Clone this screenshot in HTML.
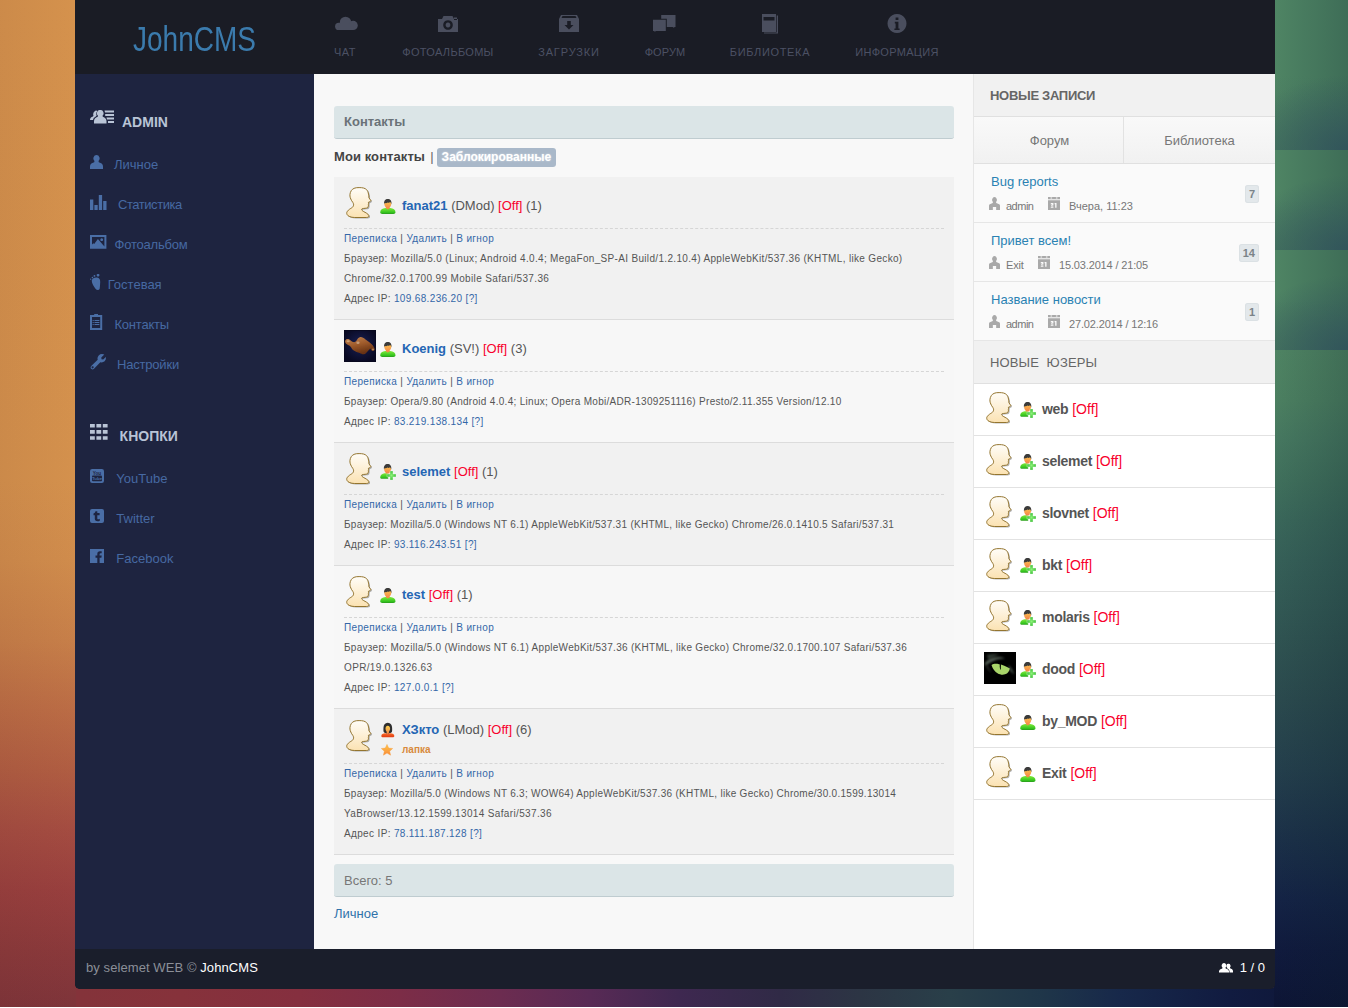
<!DOCTYPE html>
<html lang="ru">
<head>
<meta charset="utf-8">
<title>JohnCMS — Контакты</title>
<style>
*{box-sizing:border-box}
html,body{margin:0;padding:0}
body{width:1348px;height:1008px;overflow:hidden;position:relative;font-family:"Liberation Sans",Arial,sans-serif;font-size:13px;color:#555;background:#fff}
a{text-decoration:none;color:inherit}
/* ---------- wallpaper ---------- */
#wall{position:absolute;left:0;top:0;width:1348px;height:1007px;overflow:hidden;background:#3a2a4a}
#wall .l{position:absolute;left:0;top:0;width:76px;height:1007px;
background:linear-gradient(to right,rgba(90,40,30,.07) 0,rgba(90,40,30,.035) 50%,rgba(0,0,0,0) 100%),
linear-gradient(to bottom,#d5924d 0,#d4914d 480px,#d08c4c 560px,#c77f49 640px,#bb6c45 710px,#b05d42 770px,#a44c41 830px,#983f3e 890px,#8a393b 950px,#7e343a 1007px)}
#wall .r{position:absolute;left:1274px;top:0;width:74px;height:1007px;
background:linear-gradient(to right,rgba(10,30,40,0) 0,rgba(10,30,40,.22) 100%),
linear-gradient(to bottom,#4f8463 0,#4f8463 350px,#4c8061 400px,#467860 440px,#40705c 480px,#3a675a 520px,#366058 560px,#335a55 600px,#2f5251 650px,#2b4a4e 700px,#243f4c 770px,#1b3048 840px,#142345 900px,#101a3d 950px,#0d1535 1007px)}
#wall .r i{position:absolute;left:0;width:74px;display:block;
background:radial-gradient(110px 75px at 100% 100%,rgba(46,78,92,.75) 0,rgba(46,78,92,.4) 45%,rgba(46,78,92,0) 100%),linear-gradient(to bottom,rgba(60,100,85,0) 50%,rgba(58,98,88,.35) 100%),linear-gradient(to right,#4f8564 0,#487b5f 40%,#3e6d57 100%)}
#wall .b{position:absolute;left:0;top:988px;width:1348px;height:19px;
background:linear-gradient(to right,#80343a 0,#84333a 80px,#86323b 180px,#852f3f 300px,#7c2d47 400px,#6c2c50 500px,#582a55 590px,#3e2850 680px,#302a46 780px,#2c3544 860px,#293f49 950px,#1f3649 1040px,#17284a 1120px,#111b40 1230px,#0d1535 1348px)}
/* ---------- frame ---------- */
#page{position:absolute;left:75px;top:0;width:1200px;height:989px;background:#1a1d27;border-radius:0 0 5px 5px;overflow:hidden}
#head{position:absolute;left:0;top:0;width:1200px;height:74px;background:#1a1c25}
#left{position:absolute;left:0;top:74px;width:239px;height:875px;background:#1e2440}
#main{position:absolute;left:239px;top:74px;width:659px;height:875px;background:#f8f8f8}
#right{position:absolute;left:898px;top:74px;width:302px;height:875px;background:#fff;border-left:1px solid #e6e6e6}
#foot{position:absolute;left:0;top:949px;width:1200px;height:40px;background:#1a1e2b;color:#8b8f98;font-size:13px}

/* ---------- header ---------- */
#logo{position:absolute;left:0;top:14.500px;width:239px;text-align:center;font-family:"Liberation Sans",sans-serif;font-size:35px;line-height:48px;color:#3b7bad;transform:scaleX(.8);transform-origin:119.500px 0;white-space:nowrap}
#nav{position:absolute;left:0;top:0;height:74px;width:1200px}
#nav a{position:absolute;top:0;height:74px;width:140px;margin-left:-70px;text-align:center;color:#4c5164;font-size:11px;letter-spacing:.3px;text-transform:uppercase}
#nav a svg{position:absolute;left:50%;top:12px;width:24px;height:24px;margin-left:-12px;fill:#4a4e5e}
#nav a span{position:absolute;left:0;right:0;top:45px;line-height:14px;white-space:nowrap}

/* ---------- left sidebar ---------- */
#left .h{position:absolute;left:0;font-size:14px;font-weight:bold;color:#b9c4d6;line-height:16px;white-space:nowrap}
#left .h svg{position:absolute;fill:#b9c4d6}
#left a{margin-top:1px;position:absolute;font-size:13px;color:#4669a2;line-height:16px;white-space:nowrap}
#left svg.i{position:absolute;fill:#4a6ea6}
#left a.ls{letter-spacing:-.45px}
#left a.l2{letter-spacing:-.2px}

/* ---------- main ---------- */
#main .bar{position:absolute;left:20px;width:620px;height:33px;background:#dbe5e7;border-bottom:1px solid #bfccd0;border-radius:3px;padding-left:10px;line-height:32px;font-size:13px;color:#6a7278}
#main .tabs{position:absolute;left:20px;top:74px;letter-spacing:.08px;font-size:13px;font-weight:bold;color:#444;line-height:18px;white-space:nowrap}
#main .tabs b{display:inline-block;margin-left:-.8px;letter-spacing:0;padding:0 5px;height:19px;line-height:19px;background:#a9b8c9;color:#fff;border-radius:3px;font-size:12px;text-shadow:0 0 2px rgba(255,255,255,.6)}
#main .tabs i{font-style:normal;font-weight:normal;color:#666;margin-left:1.500px}
#list{position:absolute;left:20px;top:103px;width:620px}
.it{position:relative;padding:0 10px 10px;border-bottom:1px solid #dcdcdc;background:#f1f1f1}
.it.e{background:#f7f7f7}
.it .hd{position:relative;height:51px}
.it .hd .av{position:absolute;left:0;top:10px;width:32px;height:32px}
.it .hd .ic{position:absolute;left:36px;top:21px;width:16px;height:16px}
.it .hd .nm{position:absolute;left:58px;top:21px;line-height:16px;font-size:13px;white-space:nowrap;color:#555}
.it .hd .nm a{color:#2466b4;font-weight:bold}
.off{color:#f8002c}
.it .sub{border-top:1px dashed #d6d6d6;font-size:10px;line-height:20px;letter-spacing:.35px;color:#555;white-space:nowrap}
.it .sub a{color:#3467a8}
.it .st{position:absolute;left:58px;top:35px;font-size:10px;line-height:12px;font-weight:bold;color:#d88a3c;letter-spacing:0}

/* ---------- right ---------- */
#right .rh{height:43px;background:#f1f1f1;border-bottom:1px solid #e0e0e0;padding-left:16px;line-height:43px;font-size:13px;color:#666;white-space:pre}
#right .rh b{letter-spacing:-.3px}
#right .rt{height:47px;border-bottom:1px solid #e0e0e0;background:linear-gradient(#f9f9f9,#f1f1f1);position:relative}
#right .rt a{position:absolute;top:0;height:46px;line-height:47px;text-align:center;font-size:13px;color:#777}
#right .en{position:relative;height:59px;border-bottom:1px solid #e6e6e6;background:#fafafa}
#right .en .t{position:absolute;left:17px;top:10px;line-height:16px;font-size:13px;color:#2a82b3;white-space:nowrap}
#right .en .m{position:absolute;top:35px;line-height:14px;font-size:11px;color:#777;white-space:nowrap}
#right .en svg{position:absolute;top:33px;fill:#a9a9a9}
#right .en .bd{position:absolute;right:16px;top:21px;height:18px;padding:0 4px;min-width:14px;text-align:center;line-height:18px;font-size:11px;font-weight:bold;color:#7b8388;background:#e3e8eb;border-radius:3px;box-shadow:inset 0 0 0 1px #dbe1e4}
#right .us{position:relative;height:52px;border-bottom:1px solid #e2e2e2;background:#fff}
#right .us .av{position:absolute;left:10px;top:8px;width:32px;height:32px}
#right .us .ic{position:absolute;left:46px;top:18px;width:16px;height:16px}
#right .us .nm{position:absolute;left:68px;top:17px;line-height:16px;font-size:14px;white-space:nowrap}
#right .us .nm b{color:#555;letter-spacing:-.3px}
/* ---------- footer ---------- */
#foot .l{position:absolute;left:11px;top:11px;letter-spacing:.08px;line-height:16px;white-space:nowrap}
#foot .l b{font-weight:normal;color:#fff}
#foot .r{position:absolute;right:10px;top:11px;line-height:16px;color:#fff;white-space:nowrap}
#foot svg{position:absolute;left:1144px;top:13.500px;fill:#fff}
</style>
</head>
<body>
<svg width="0" height="0" style="position:absolute">
<defs>
<linearGradient id="gHead" x1="0" y1="0" x2="0" y2="1"><stop offset="0" stop-color="#fffdf8"/><stop offset="1" stop-color="#fbe2b2"/></linearGradient>
<linearGradient id="gBody" x1="0" y1="0" x2="0" y2="1"><stop offset="0" stop-color="#7fe93c"/><stop offset=".75" stop-color="#35c41f"/><stop offset="1" stop-color="#2a9a1c"/></linearGradient>
<linearGradient id="gFace" x1="0" y1="0" x2="0" y2="1"><stop offset="0" stop-color="#fbd04e"/><stop offset="1" stop-color="#f4814a"/></linearGradient>
<linearGradient id="gRed" x1="0" y1="0" x2="0" y2="1"><stop offset="0" stop-color="#f86a2a"/><stop offset="1" stop-color="#e03a10"/></linearGradient>
<linearGradient id="gStar" x1="0" y1="0" x2="0" y2="1"><stop offset="0" stop-color="#ffc84a"/><stop offset="1" stop-color="#f98a3a"/></linearGradient>
<radialGradient id="gPlus" cx=".5" cy=".5" r=".6"><stop offset="0" stop-color="#8df27a"/><stop offset="1" stop-color="#2fb52a"/></radialGradient>
<filter id="fSh" x="-20%" y="-20%" width="150%" height="150%"><feGaussianBlur stdDeviation=".7"/></filter>
<filter id="fB1" x="-20%" y="-20%" width="140%" height="140%"><feGaussianBlur stdDeviation=".9"/></filter>
<symbol id="avh" viewBox="0 0 32 32">
<path d="M15.100 .6C11 .4 8.400 1.800 7.300 3.600C5.800 6 5.600 8.500 6.300 10.800C6.900 12.800 7.800 13.900 8.800 15.400C9.600 16.600 9.800 17.700 9.400 18.800C9 20 8.200 20.600 6.800 21.400C5 22.500 3.400 23.800 2.800 25.400C2.400 27 3.400 28.600 5.200 29.400C7 30.200 8.800 30.500 10.700 30.500H22.400C24.200 30.500 25.200 29.700 24.800 28.500C24.400 27.500 23.600 26.800 22.400 26.100C20.600 25 18.600 24.200 17.800 23.100C17.500 22.400 17.700 21.800 18.400 21.600C20 21.300 22.400 21.400 23.600 20.700C24.300 20.200 24.100 19.200 24.500 18.200C24.300 17.600 24.300 17.200 24.600 16.700C24.300 16.200 24.300 15.700 24.500 15.200C25.500 14.900 26.700 14.200 26.900 13.500C26.300 12.500 25.200 11.600 24.900 10.700C25 9.400 24.800 8.300 24.500 7.100C24.200 5.400 23.700 3.800 22.500 2.600C21.200 1.300 18.800 .5 15.100 .6Z" transform="translate(1.200,1)" fill="#000" opacity=".28" filter="url(#fSh)"/>
<path d="M15.100 .6C11 .4 8.400 1.800 7.300 3.600C5.800 6 5.600 8.500 6.300 10.800C6.900 12.800 7.800 13.900 8.800 15.400C9.600 16.600 9.800 17.700 9.400 18.800C9 20 8.200 20.600 6.800 21.400C5 22.500 3.400 23.800 2.800 25.400C2.400 27 3.400 28.600 5.200 29.400C7 30.200 8.800 30.500 10.700 30.500H22.400C24.200 30.500 25.200 29.700 24.800 28.500C24.400 27.500 23.600 26.800 22.400 26.100C20.600 25 18.600 24.200 17.800 23.100C17.500 22.400 17.700 21.800 18.400 21.600C20 21.300 22.400 21.400 23.600 20.700C24.300 20.200 24.100 19.200 24.500 18.200C24.300 17.600 24.300 17.200 24.600 16.700C24.300 16.200 24.300 15.700 24.500 15.200C25.500 14.900 26.700 14.200 26.900 13.500C26.300 12.500 25.200 11.600 24.900 10.700C25 9.400 24.800 8.300 24.500 7.100C24.200 5.400 23.700 3.800 22.500 2.600C21.200 1.300 18.800 .5 15.100 .6Z" fill="url(#gHead)" stroke="#94752f" stroke-width="1"/>
</symbol>
<symbol id="u1" viewBox="0 0 16 16">
<path d="M.2 14.300C.2 11.600 2.500 10.300 5.200 10H10.400C13.200 10.300 15.500 11.600 15.500 14.300C15.500 15.400 14.600 15.900 13.400 15.900H2.300C1.100 15.900 .2 15.400 .2 14.300Z" fill="url(#gBody)"/>
<path d="M7.800 1.600C10 1.600 11.400 3.400 11.300 5.800C11.200 7.600 10.500 8.700 9.700 9.500V10.300L7.800 11.400L5.900 10.300V9.500C5.100 8.700 4.400 7.600 4.300 5.800C4.200 3.400 5.600 1.600 7.800 1.600Z" fill="url(#gFace)"/>
<path d="M4.200 6.200C3.600 2.800 5.400 .9 7.800 .9C10.300 .9 12 2.800 11.400 6.200C11.100 5.200 10.700 4.600 10.100 4.100C9.300 4.900 8.500 4.900 7.700 4.400C7 5.200 5.800 5.300 4.800 5C4.500 5.300 4.300 5.700 4.200 6.200Z" fill="#3b3b3b"/>
</symbol>
<symbol id="u2" viewBox="0 0 16 16">
<path d="M.2 13.300C.2 10.800 2.300 9.500 4.600 9.200H8.200V14.800H2.200C1 14.800 .2 14.300 .2 13.300Z" fill="url(#gBody)"/>
<path d="M7.600 .8C9.800 .8 11.200 2.600 11.100 5C11 6.800 10.300 7.900 9.500 8.700V9.500H5.700V8.700C4.900 7.900 4.200 6.800 4.100 5C4 2.600 5.400 .8 7.600 .8Z" fill="url(#gFace)"/>
<path d="M4 5.400C3.400 2 5.200 .1 7.600 .1C10.100 .1 11.800 2 11.200 5.400C10.900 4.400 10.500 3.800 9.900 3.300C9.100 4.100 8.300 4.100 7.500 3.600C6.800 4.400 5.600 4.500 4.600 4.200C4.300 4.500 4.100 4.900 4 5.400Z" fill="#3b3b3b"/>
<path d="M10 7H13V10H16V13H13V16H10V13H7V10H10Z" fill="url(#gPlus)" stroke="#f4fff0" stroke-width=".5" stroke-opacity=".7"/>
</symbol>
<symbol id="u3" viewBox="0 0 16 16">
<path d="M1.300 14C1.300 12.300 3 11.500 5 11.300H10.600C12.600 11.500 14.300 12.300 14.300 14C14.300 14.900 13.600 15.300 12.600 15.300H3C2 15.300 1.300 14.900 1.300 14Z" fill="url(#gRed)"/>
<path d="M7.800 .8C10.700 .8 12 3 12.100 5.600C12.200 8 12.400 9.800 11.400 10.600C10.600 11.200 9.600 11.100 9.600 11.100L7.800 12L6 11.100C6 11.100 5 11.200 4.200 10.600C3.200 9.800 3.400 8 3.500 5.600C3.600 3 4.900 .8 7.800 .8Z" fill="#2e2e2e"/>
<path d="M7.800 3.800C9.400 4 10.200 5.200 10.100 6.800C10 8.300 9.400 9.200 8.900 9.800V10.900L7.800 12.600L6.700 10.900V9.800C6.200 9.200 5.600 8.300 5.500 6.800C5.400 5.200 6.200 4 7.800 3.800Z" fill="url(#gFace)"/>
</symbol>
<symbol id="star" viewBox="0 0 12 12">
<path d="M6 .4L7.700 4.100L11.700 4.500L8.700 7.200L9.600 11.200L6 9.100L2.400 11.200L3.300 7.200L.3 4.500L4.300 4.100Z" fill="url(#gStar)" stroke="#f7a040" stroke-width=".4" stroke-linejoin="round"/>
</symbol>
</defs>
</svg>
<div id="wall"><div class="b"></div><div class="l"></div><div class="r"><i style="top:0;height:150px"></i><i style="top:150px;height:100px"></i><i style="top:250px;height:100px"></i></div></div>
<div id="page">
<div id="head">
<div id="logo">JohnCMS</div>
<div id="nav">
<a style="left:270px"><svg viewBox="0 0 24 24" style="overflow:visible"><circle cx="5.700" cy="14.400" r="3.600"/><circle cx="12.500" cy="10.400" r="5.700"/><circle cx="20.200" cy="13.400" r="4.600"/><rect x="5.700" y="12" width="14.500" height="6"/></svg><span style="letter-spacing:.57px">Чат</span></a>
<a style="left:373px"><svg viewBox="0 0 24 24"><path fill-rule="evenodd" d="M2 7h4l1.500-3h9l1.5 3h4v13h-20zM12 8.200a4.800 4.800 0 1 0 .01 0zM12 10.600a2.400 2.400 0 1 1-.01 0zM18 5.500h3v2.500h-3z"/></svg><span>Фотоальбомы</span></a>
<a style="left:494px"><svg viewBox="0 0 24 24"><path fill-rule="evenodd" d="M2 7l2-4h16l2 4v13h-20zM4.500 6h15l-1-2h-13zM10.200 9h3.600v4h2.700l-4.500 4.500-4.500-4.500h2.700z"/></svg><span style="letter-spacing:.87px">Загрузки</span></a>
<a style="left:590px"><svg viewBox="0 0 24 24"><path d="M8.200 2.900h14.300v12.100h-1.300v1l-1.500-1h-5.900v-8.300h-5.600z"/><path d="M0 7.700h12.800v11.300h-9.800l-1.500 1v-1h-1.500z"/></svg><span style="letter-spacing:.1px">Форум</span></a>
<a style="left:695px"><svg viewBox="0 0 24 24"><path fill-rule="evenodd" d="M4 2h14v18h-14zM5.500 5h11v3.500h-11z"/><path d="M18.700 3.500h1.300v18h-14v-1h12.700z"/></svg><span style="letter-spacing:.65px">Библиотека</span></a>
<a style="left:822px"><svg viewBox="0 0 24 24"><path fill-rule="evenodd" d="M12 2a9.500 9.500 0 1 0 .01 0zM10.600 5.500h2.800v2.600h-2.800zM9.800 9.800h3.600v6.600h1.200v1.600h-5.200v-1.600h1.200v-5h-.8z"/></svg><span>Информация</span></a>
</div>
</div>
<div id="left">
<div class="h" style="left:47px;top:40px">ADMIN</div>
<svg class="i" style="left:15px;top:36px;fill:#b9c4d6" width="24" height="14" viewBox="0 0 24 14"><path d="M4.500 1.500a2.300 2.600 0 0 1 3 -.5a4 4 0 0 0 -.8 4.500l-1.200 1.300q-2.300 .8 -2.500 3.200h-3q0-2.700 3-3.600l.5-.8q-1-2 .9-4.100z"/><path d="M10.300 0a3 3.300 0 0 1 2.200 5.800l.3 1q3.700 1 3.700 4.500v2.200h-12.500v-2.200q0-3.500 3.700-4.500l.3-1a3 3.300 0 0 1 2.300-5.800z"/><path d="M14.500 .5h9.500v2h-9zM15.200 4h8.800v2h-8.800zM16.500 7.500h7.500v2h-7zM18 11h6v2h-6z"/></svg>
<a style="left:39px;top:82px">Личное</a>
<a style="left:43px;top:122px" class="ls">Статистика</a>
<a style="left:39.5px;top:162px" class="l2">Фотоальбом</a>
<a style="left:32.7px;top:202px">Гостевая</a>
<a style="left:39.400000000000006px;top:242px" class="l2">Контакты</a>
<a style="left:42px;top:282px" class="l2">Настройки</a>
<svg class="i" style="left:15px;top:81px" width="13" height="14" viewBox="0 0 13 14"><path d="M6.500 0a3.100 3.400 0 0 1 2 6l.3 1.300q4.200 1 4.200 4.200v2.500h-13v-2.500q0-3.200 4.200-4.200l.3-1.300a3.100 3.400 0 0 1 2-6z"/></svg>
<svg class="i" style="left:15px;top:120.5px" width="17" height="15" viewBox="0 0 17 15"><path d="M0 4.500h3.300v10.500h-3.300zM4.400 10h3.300v5h-3.300zM8.800 0h3.300v15h-3.300zM13.200 6h3.300v9h-3.300z"/></svg>
<svg class="i" style="left:15px;top:161px" width="17" height="14" viewBox="0 0 17 14"><path fill-rule="evenodd" d="M0 0h16.400v13.800h-16.400zM2 2v7.400l1.300-1.200l.9 .8l3.700-5l6.500 7.600v-9.600zM11.700 3.300a1.400 1.400 0 1 0 .01 0z"/></svg>
<svg class="i" style="left:15px;top:200px" width="11" height="17" viewBox="0 0 11 17"><path d="M6.100 3.600C8.500 3.200 10.400 5 10.200 8C10.100 10.500 9.900 13 9.700 14.500C9.500 16.200 6.800 16.600 5.700 15C4.200 12.800 1.800 10 1.750 6.800C1.800 5 3.800 3.900 6.100 3.600Z"/><rect x="6.700" y="0" width="2.700" height="2.400" rx=".8"/><circle cx="4.450" cy="1.900" r=".95"/><circle cx="2.400" cy="3.600" r=".8"/><circle cx=".700" cy="5.200" r=".65"/></svg>
<svg class="i" style="left:15px;top:240px" width="13" height="16" viewBox="0 0 13 16"><path fill-rule="evenodd" d="M0 1.100h4.200v-1.100h3.800v1.100h4.200v14.900h-12.200zM2 3.100v10.900h8.200v-10.900zM2.600 5.900h1.100v1h-1.100zM4.500 5.900h4.900v1h-4.900zM2.600 7.900h1.100v1h-1.100zM4.500 7.900h4.900v1h-4.900zM2.600 9.900h1.100v1h-1.100zM4.500 9.900h4.900v1h-4.900z"/></svg>
<svg class="i" style="left:15px;top:280px" width="16" height="16" viewBox="0 0 16 16"><path fill-rule="evenodd" d="M12 0q1.300 0 2.300.6l-3 3 .2 1.700 1.700.2 2.600-2.600q.6 2.500-1.200 4.400q-1.800 1.600-4.300 1l-6.300 6.500q-1.300 1.200-2.800 0q-1.200-1.400 0-2.800l6.500-6.300q-.7-2.400 1-4.300q1.400-1.400 3.300-1.400zM2.600 12.300a1 1 0 1 0 .01 0z"/></svg>
<div class="h" style="left:44.599999999999994px;top:354px">КНОПКИ</div>
<svg class="i" style="left:15.300px;top:350px;fill:#b9c4d6" width="18" height="16" viewBox="0 0 18 16"><path d="M0 0h4.800v3.600h-4.800zM6.4 0h4.800v3.600h-4.800zM12.8 0h4.800v3.600h-4.800zM0 6.1h4.800v3.600h-4.800zM6.4 6.1h4.800v3.600h-4.800zM12.8 6.1h4.800v3.600h-4.800zM0 12.2h4.800v3.600h-4.800zM6.4 12.2h4.800v3.600h-4.800zM12.8 12.2h4.800v3.600h-4.800z"/></svg>
<a style="left:41.3px;top:396px">YouTube</a>
<a style="left:41.3px;top:436px">Twitter</a>
<a style="left:41.3px;top:476px">Facebook</a>
<svg class="i" style="left:15px;top:395px" width="14" height="14" viewBox="0 0 14 14"><rect width="14" height="14" rx="2.200"/><rect x="2" y="6.600" width="10" height="5.600" rx="1" fill="#1e2440"/><text x="7" y="5.600" font-family="Liberation Sans,sans-serif" font-size="4.600" font-weight="bold" text-anchor="middle" fill="#1e2440">You</text><text x="7" y="11.300" font-family="Liberation Sans,sans-serif" font-size="4.400" font-weight="bold" text-anchor="middle" fill="#4a6ea6">Tube</text></svg>
<svg class="i" style="left:15px;top:435px" width="14" height="14" viewBox="0 0 14 14"><path fill-rule="evenodd" d="M2 0h10a2 2 0 0 1 2 2v10a2 2 0 0 1-2 2h-10a2 2 0 0 1-2-2v-10a2 2 0 0 1 2-2zM5.500 2.200q-.3 2-2 2.300v1.800h1.300v3.500q0 2.400 2.800 2.400q1.300 0 2.200-.5v-1.900q-.9.500-1.600.5q-.9 0-.9-.9v-3.100h2.300v-2.200h-2.300v-1.900z"/></svg>
<svg class="i" style="left:15px;top:475px" width="14" height="14" viewBox="0 0 14 14"><path fill-rule="evenodd" d="M0 0h14v14h-14zM7.300 14v-5.300h-1.800v-2.100h1.800v-1.700q0-2.700 2.700-2.700q1 0 1.700.1v1.900h-1.100q-1 0-1 1v1.400h2.100l-.3 2.100h-1.800v5.300z"/></svg>
</div>
<div id="main">
<div class="bar" style="top:32px"><b>Контакты</b></div>
<div class="tabs">Мои контакты <i>|</i> <b>Заблокированные</b></div>
<div id="list">
<div class="it "><div class="hd"><svg class="av"><use href="#avh"/></svg><svg class="ic"><use href="#u1"/></svg><div class="nm"><a>fanat21</a> (DMod) <span class="off">[Off]</span> (1)</div></div><div class="sub"><a>Переписка</a> | <a>Удалить</a> | <a>В игнор</a><br><span style="letter-spacing:.33px">Браузер: Mozilla/5.0 (Linux; Android 4.0.4; MegaFon_SP-AI Build/1.2.10.4) AppleWebKit/537.36 (KHTML, like Gecko)</span><br>Chrome/32.0.1700.99 Mobile Safari/537.36<br>Адрес IP: <a>109.68.236.20</a> <a>[?]</a></div></div>
<div class="it e"><div class="hd"><svg class="av" viewBox="0 0 32 32"><defs><radialGradient id="gK" cx=".5" cy=".45" r=".6"><stop offset="0" stop-color="#1a2156"/><stop offset=".6" stop-color="#0f1236"/><stop offset="1" stop-color="#090922"/></radialGradient><linearGradient id="gH" x1="0" y1="0" x2=".4" y2="1"><stop offset="0" stop-color="#c08450"/><stop offset=".5" stop-color="#a05c2c"/><stop offset="1" stop-color="#683212"/></linearGradient></defs><rect width="32" height="32" fill="#07071c"/><rect x=".7" y=".7" width="30.600" height="30.600" fill="url(#gK)"/><path d="M1.200 10.700C1.800 9 3.400 8.600 5 9.300C6.600 10 7.400 11.500 9 12C10.400 12.400 11.600 12 12.400 10.800C13.400 9.200 14.600 7.400 16.400 7.100C18.200 6.900 19.600 8 21.200 9.300C23 10.700 25 11.700 26.800 13.400C28.400 14.900 30 16.300 30.600 18.600C31 20.200 30.200 21.200 28.800 21.100C27.400 21 26.900 19.400 26.200 18.500C25.700 19.200 25.200 19.600 24.600 20.200C23.200 21.800 21.600 24.200 19.600 24.300C18 24.400 17.200 23.600 15.600 23C13.600 22.300 11.400 21.800 9.800 20.600C8.200 19.400 7.600 17.700 6.400 16.400C5 14.900 3 14.700 1.900 13.400C1.300 12.600 .9 11.700 1.200 10.700Z" fill="url(#gH)" filter="url(#fSh)"/><ellipse cx="4.200" cy="11.200" rx="1.600" ry="1" fill="#d9b48a" opacity=".7" filter="url(#fSh)"/><ellipse cx="14" cy="12.800" rx="1.600" ry="1.200" fill="#d8c0a8" opacity=".6" filter="url(#fSh)"/><ellipse cx="29" cy="19.400" rx="1.200" ry="1" fill="#d9b48a" opacity=".6" filter="url(#fSh)"/></svg><svg class="ic"><use href="#u1"/></svg><div class="nm"><a>Koenig</a> (SV!) <span class="off">[Off]</span> (3)</div></div><div class="sub"><a>Переписка</a> | <a>Удалить</a> | <a>В игнор</a><br><span style="letter-spacing:.3px">Браузер: Opera/9.80 (Android 4.0.4; Linux; Opera Mobi/ADR-1309251116) Presto/2.11.355 Version/12.10</span><br>Адрес IP: <a>83.219.138.134</a> <a>[?]</a></div></div>
<div class="it "><div class="hd"><svg class="av"><use href="#avh"/></svg><svg class="ic"><use href="#u2"/></svg><div class="nm"><a>selemet</a> <span class="off">[Off]</span> (1)</div></div><div class="sub"><a>Переписка</a> | <a>Удалить</a> | <a>В игнор</a><br><span style="letter-spacing:.285px">Браузер: Mozilla/5.0 (Windows NT 6.1) AppleWebKit/537.31 (KHTML, like Gecko) Chrome/26.0.1410.5 Safari/537.31</span><br>Адрес IP: <a>93.116.243.51</a> <a>[?]</a></div></div>
<div class="it e"><div class="hd"><svg class="av"><use href="#avh"/></svg><svg class="ic"><use href="#u1"/></svg><div class="nm"><a>test</a> <span class="off">[Off]</span> (1)</div></div><div class="sub"><a>Переписка</a> | <a>Удалить</a> | <a>В игнор</a><br><span style="letter-spacing:.295px">Браузер: Mozilla/5.0 (Windows NT 6.1) AppleWebKit/537.36 (KHTML, like Gecko) Chrome/32.0.1700.107 Safari/537.36</span><br>OPR/19.0.1326.63<br>Адрес IP: <a>127.0.0.1</a> <a>[?]</a></div></div>
<div class="it "><div class="hd" style="height:54px"><svg class="av" style="top:11px"><use href="#avh"/></svg><svg class="ic" style="top:13px"><use href="#u3"/></svg><div class="nm" style="top:13px"><a>ХЗкто</a> (LMod) <span class="off">[Off]</span> (6)</div><svg style="position:absolute;left:37px;top:35px;width:12px;height:12px"><use href="#star"/></svg><div class="st">лапка</div></div><div class="sub"><a>Переписка</a> | <a>Удалить</a> | <a>В игнор</a><br><span style="letter-spacing:.28px">Браузер: Mozilla/5.0 (Windows NT 6.3; WOW64) AppleWebKit/537.36 (KHTML, like Gecko) Chrome/30.0.1599.13014</span><br>YaBrowser/13.12.1599.13014 Safari/537.36<br>Адрес IP: <a>78.111.187.128</a> <a>[?]</a></div></div>
</div>
<div class="bar" style="top:790px;color:#777;line-height:34px">Всего: 5</div>
<a style="position:absolute;left:20px;top:832px;line-height:16px;font-size:13px;color:#2f72aa">Личное</a>
</div>
<div id="right">
<div class="rh"><b>НОВЫЕ ЗАПИСИ</b></div>
<div class="rt"><a style="left:0;width:150px;padding-left:2px;border-right:1px solid #e2e2e2">Форум</a><a style="left:150px;width:151px">Библиотека</a></div>
<div class="en"><a class="t">Bug reports</a><svg style="left:15px" width="11" height="13" viewBox="0 0 12 13" preserveAspectRatio="none"><path d="M6 0a2.600 2.900 0 0 1 1.700 5.100l.2 .9l3.200 1.300q.9 .4 .9 1.400v4.300h-4.200v-3h-3.600v3h-4.200v-4.300q0-1 .9-1.400l3.200-1.300l.2-.9a2.600 2.900 0 0 1 1.700-5.100z"/></svg><span class="m" style="left:32px;letter-spacing:-0.5px">admin</span><svg style="left:74px" width="12" height="13" viewBox="0 0 12 13"><path fill-rule="evenodd" d="M0 0h12v2.200h-12zM0 3.200h12v9.800h-12zM2.500 .6v1h1.600v-1zM7.900 .6v1h1.600v-1zM2.800 6h2.600v2.600h-1.100v.9h1.100v1.300h-2.600v-1.100h1.300v-.5h-1v-1h1v-.6h-1.300zM6.600 6h1.900v4.800h-1.300v-3.500h-.6z"/></svg><span class="m" style="left:95px">Вчера, 11:23</span><span class="bd">7</span></div>
<div class="en"><a class="t">Привет всем!</a><svg style="left:15px" width="11" height="13" viewBox="0 0 12 13" preserveAspectRatio="none"><path d="M6 0a2.600 2.900 0 0 1 1.700 5.100l.2 .9l3.200 1.300q.9 .4 .9 1.400v4.300h-4.200v-3h-3.600v3h-4.200v-4.300q0-1 .9-1.400l3.200-1.300l.2-.9a2.600 2.900 0 0 1 1.700-5.100z"/></svg><span class="m" style="left:32px;letter-spacing:-0.2px">Exit</span><svg style="left:64px" width="12" height="13" viewBox="0 0 12 13"><path fill-rule="evenodd" d="M0 0h12v2.200h-12zM0 3.200h12v9.800h-12zM2.500 .6v1h1.600v-1zM7.900 .6v1h1.600v-1zM2.800 6h2.600v2.600h-1.100v.9h1.100v1.300h-2.600v-1.100h1.300v-.5h-1v-1h1v-.6h-1.300zM6.600 6h1.900v4.800h-1.300v-3.500h-.6z"/></svg><span class="m" style="left:85px;letter-spacing:-.15px">15.03.2014 / 21:05</span><span class="bd">14</span></div>
<div class="en"><a class="t">Название новости</a><svg style="left:15px" width="11" height="13" viewBox="0 0 12 13" preserveAspectRatio="none"><path d="M6 0a2.600 2.900 0 0 1 1.700 5.100l.2 .9l3.200 1.300q.9 .4 .9 1.400v4.300h-4.200v-3h-3.600v3h-4.200v-4.300q0-1 .9-1.400l3.200-1.300l.2-.9a2.600 2.900 0 0 1 1.700-5.100z"/></svg><span class="m" style="left:32px;letter-spacing:-0.5px">admin</span><svg style="left:74px" width="12" height="13" viewBox="0 0 12 13"><path fill-rule="evenodd" d="M0 0h12v2.200h-12zM0 3.200h12v9.800h-12zM2.500 .6v1h1.600v-1zM7.900 .6v1h1.600v-1zM2.800 6h2.600v2.600h-1.100v.9h1.100v1.300h-2.600v-1.100h1.300v-.5h-1v-1h1v-.6h-1.300zM6.600 6h1.900v4.800h-1.300v-3.500h-.6z"/></svg><span class="m" style="left:95px;letter-spacing:-.15px">27.02.2014 / 12:16</span><span class="bd">1</span></div>
<div class="rh" style="letter-spacing:.15px">НОВЫЕ  ЮЗЕРЫ</div>
<div class="us"><svg class="av"><use href="#avh"/></svg><svg class="ic"><use href="#u2"/></svg><div class="nm"><b>web</b> <span class="off">[Off]</span></div></div>
<div class="us"><svg class="av"><use href="#avh"/></svg><svg class="ic"><use href="#u2"/></svg><div class="nm"><b>selemet</b> <span class="off">[Off]</span></div></div>
<div class="us"><svg class="av"><use href="#avh"/></svg><svg class="ic"><use href="#u2"/></svg><div class="nm"><b>slovnet</b> <span class="off">[Off]</span></div></div>
<div class="us"><svg class="av"><use href="#avh"/></svg><svg class="ic"><use href="#u2"/></svg><div class="nm"><b>bkt</b> <span class="off">[Off]</span></div></div>
<div class="us"><svg class="av"><use href="#avh"/></svg><svg class="ic"><use href="#u2"/></svg><div class="nm"><b>molaris</b> <span class="off">[Off]</span></div></div>
<div class="us"><svg class="av" viewBox="0 0 32 32"><rect width="32" height="32" fill="#000"/><g filter="url(#fB1)"><path d="M1 11C4 7 9 5.500 14 5C17 4.700 19.500 5.500 21 7C17 6.500 13 7.500 9.500 9C6 10.500 3 12.500 1 14Z" fill="#56645a" opacity=".9"/><path d="M3 3C7 2 12 1.500 16 2.500C12 3.500 8 5 4 7.500Z" fill="#3c473f" opacity=".8"/><path d="M24.500 13C27 15 29.500 18.500 30 22.500C28 21 26 19 25 17Z" fill="#4a564d" opacity=".8"/><path d="M3.500 13C4.500 16 5.500 18 7.500 20.500C5.500 19.500 3 17 2.500 14.500Z" fill="#39423b" opacity=".8"/></g><path d="M7.500 13C9 11.800 12 11.600 15 12.200C18.500 12.900 22 14 25.800 16.400C25.400 19 24 21.200 21 22.300C18.500 23.200 16 22.600 13.500 21.200C11 19.800 8.600 17 7.500 13Z" fill="#a9d56a" filter="url(#fSh)"/><path d="M15.800 11.800C16.200 11.600 16.900 11.800 17 12.400L16.800 17.200C16.700 17.800 16.200 17.800 16.100 17.200C15.700 15.400 15.500 13.600 15.800 11.800Z" fill="#0a0f05"/></svg><svg class="ic"><use href="#u2"/></svg><div class="nm"><b>dood</b> <span class="off">[Off]</span></div></div>
<div class="us"><svg class="av"><use href="#avh"/></svg><svg class="ic"><use href="#u1"/></svg><div class="nm"><b>by_MOD</b> <span class="off">[Off]</span></div></div>
<div class="us"><svg class="av"><use href="#avh"/></svg><svg class="ic"><use href="#u1"/></svg><div class="nm"><b>Exit</b> <span class="off">[Off]</span></div></div>
</div>
<div id="foot"><div class="l">by selemet WEB © <b>JohnCMS</b></div><svg width="14" height="10" viewBox="0 0 14 10"><path d="M9.600 .8a1.900 2.200 0 0 1 1.400 3.800l.1 .7q2.700 .7 2.900 2.400v1.800h-3.500v-1.600q-.2-1.700-2.200-2.400l-.2-.8a1.900 2.200 0 0 1 1.500-3.900z"/><path d="M5 0a2.300 2.600 0 0 1 1.500 4.600l.2 .8q3 .8 3.300 2.500v1.600h-10v-1.600q.3-1.700 3.300-2.500l.2-.8a2.300 2.600 0 0 1 1.500-4.600z"/></svg><div class="r">1 / 0</div></div>
</div>
</body>
</html>
